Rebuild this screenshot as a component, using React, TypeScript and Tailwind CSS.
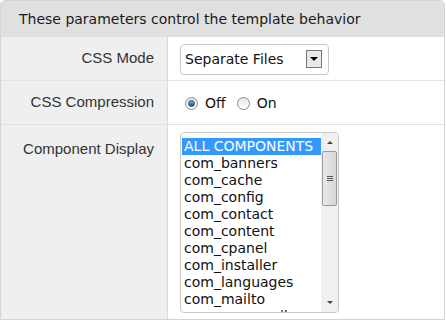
const components = [
  "ALL COMPONENTS",
  "com_banners",
  "com_cache",
  "com_config",
  "com_contact",
  "com_content",
  "com_cpanel",
  "com_installer",
  "com_languages",
  "com_mailto",
  "com_massmail",
];

const Radio = ({ checked }: { checked?: boolean }) => (
  <span className="flex h-[13px] w-[13px] items-center justify-center rounded-full border border-[#8a8a8a] bg-gradient-to-b from-[#e6e6e6] to-[#ffffff]">
    {checked && (
      <span className="h-[7px] w-[7px] rounded-full bg-gradient-to-b from-[#6fb6e8] to-[#15527f] border border-[#1b4f75]" />
    )}
  </span>
);

const Label = ({ children, tall }: { children: string; tall?: boolean }) => (
  <div
    className={`flex w-[167px] shrink-0 justify-end border-r border-[#d9d9d9] bg-[#efefef] pr-[13px] text-[15px] text-[#333] ${
      tall ? "items-start pt-[13px]" : "items-center"
    }`}
    style={{ fontFamily: '"Liberation Sans", Arial, sans-serif' }}
  >
    {children}
  </div>
);

export default function App() {
  return (
    <div className="h-[322px] w-[446px] bg-white">
      <div
        className="flex h-[320px] w-[445px] flex-col overflow-hidden rounded-t-[5px] border border-[#d4d4d4] text-[#111]"
        style={{ fontFamily: '"DejaVu Sans", Verdana, sans-serif' }}
      >
        <div className="flex h-[36px] shrink-0 items-center bg-[#e0e0e0] pl-[18px] text-[14px] text-[#1a1a1a]">
          These parameters control the template behavior
        </div>

        <div className="flex h-[44px] shrink-0 border-b border-[#e2e2e2]">
          <Label>CSS Mode</Label>
          <div className="flex items-center pl-[12px] pt-[1px]">
            <div className="flex h-[31px] w-[149px] items-center justify-between rounded-[4px] border border-[#c8c8c8] pl-[4px] pr-[6px] text-[14px]">
              <span>Separate Files</span>
              <span className="flex h-[18px] w-[16px] items-center justify-center border border-[#777] bg-[#e8e8e8]">
                <span className="h-0 w-0 border-x-[4px] border-t-[4px] border-x-transparent border-t-black" />
              </span>
            </div>
          </div>
        </div>

        <div className="flex h-[44px] shrink-0 border-b border-[#e2e2e2]">
          <Label>CSS Compression</Label>
          <div className="flex items-center gap-[7px] pl-[17px] pt-[2px] text-[14px]">
            <Radio checked />
            <span className="mr-[4px]">Off</span>
            <Radio />
            <span>On</span>
          </div>
        </div>

        <div className="flex flex-1">
          <Label tall>Component Display</Label>
          <div className="pl-[12px] pt-[7px]">
            <div className="flex h-[181px] w-[159px] overflow-hidden rounded-[4px] border border-[#c8c8c8] text-[14px]">
              <div className="flex-1 overflow-hidden pl-[1px] pt-[5px]">
                {components.map((c, i) => (
                  <div
                    key={c}
                    className={`h-[17px] whitespace-nowrap pl-[2px] leading-[17px] ${
                      i === 0 ? "bg-[#3399ff] text-white" : ""
                    }`}
                  >
                    {c}
                  </div>
                ))}
              </div>
              <div className="flex w-[17px] flex-col items-center bg-[#f0f0f0] py-[1px]">
                <div className="flex h-[17px] items-center justify-center">
                  <span className="h-0 w-0 border-x-[3px] border-b-[3px] border-x-transparent border-b-[#444]" />
                </div>
                <div className="flex h-[55px] w-[15px] flex-col items-center justify-center gap-[1px] rounded-[2px] border border-[#9a9a9a] bg-gradient-to-r from-[#e8e8e8] to-[#d6d6d6]">
                  <span className="h-px w-[6px] bg-[#555]" />
                  <span className="h-px w-[6px] bg-[#555]" />
                  <span className="h-px w-[6px] bg-[#555]" />
                </div>
                <div className="flex-1" />
                <div className="flex h-[17px] items-center justify-center">
                  <span className="h-0 w-0 border-x-[3px] border-t-[3px] border-x-transparent border-t-[#444]" />
                </div>
              </div>
            </div>
          </div>
        </div>
      </div>
    </div>
  );
}
